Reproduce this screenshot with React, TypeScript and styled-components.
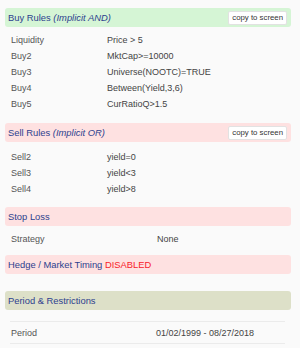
import styled, { createGlobalStyle } from "styled-components";

type Tone = "green" | "pink" | "olive";

const tones: Record<Tone, string> = {
  green: "#d5f5d5",
  pink: "#fee1e1",
  olive: "#dde0c8",
};

const buyRules = [
  ["Liquidity", "Price > 5"],
  ["Buy2", "MktCap>=10000"],
  ["Buy3", "Universe(NOOTC)=TRUE"],
  ["Buy4", "Between(Yield,3,6)"],
  ["Buy5", "CurRatioQ>1.5"],
];

const sellRules = [
  ["Sell2", "yield=0"],
  ["Sell3", "yield<3"],
  ["Sell4", "yield>8"],
];

export default function App() {
  return (
    <>
      <GlobalStyle />
      <Page>
        <Header $tone="green">
          <span>
            Buy Rules <Hint>(Implicit AND)</Hint>
          </span>
          <CopyButton>copy to screen</CopyButton>
        </Header>
        <RuleList $after={11}>
          {buyRules.map(([name, rule]) => (
            <RuleRow key={name}>
              <Label $width={96}>{name}</Label>
              <Value>{rule}</Value>
            </RuleRow>
          ))}
        </RuleList>

        <Header $tone="pink">
          <span>
            Sell Rules <Hint>(Implicit OR)</Hint>
          </span>
          <CopyButton>copy to screen</CopyButton>
        </Header>
        <RuleList $before={7} $after={10}>
          {sellRules.map(([name, rule]) => (
            <RuleRow key={name}>
              <Label $width={96}>{name}</Label>
              <Value>{rule}</Value>
            </RuleRow>
          ))}
        </RuleList>

        <Header $tone="pink">
          <span>Stop Loss</span>
        </Header>
        <RuleList $after={8}>
          <RuleRow>
            <Label $width={146}>Strategy</Label>
            <Value>None</Value>
          </RuleRow>
        </RuleList>

        <Header $tone="pink">
          <span>
            Hedge / Market Timing <Disabled>DISABLED</Disabled>
          </span>
        </Header>

        <Header $tone="olive" $gap={17}>
          <span>Period &amp; Restrictions</span>
        </Header>
        <PeriodTable>
          <Label $width={146} $inset={1}>Period</Label>
          <Value>01/02/1999 - 08/27/2018</Value>
        </PeriodTable>
      </Page>
    </>
  );
}

const GlobalStyle = createGlobalStyle`
  html, body {
    margin: 0;
    background: #fafafa;
  }
  body {
    font-family: "Liberation Sans", Arial, sans-serif;
    font-size: 9px;
    color: #444;
  }
`;

const Page = styled.div`
  padding: 8px 9px 0 5px;
`;

const Header = styled.div<{ $tone: Tone; $gap?: number }>`
  display: flex;
  align-items: center;
  justify-content: space-between;
  height: 19px;
  margin-top: ${({ $gap }) => $gap ?? 0}px;
  padding: 0 4px 0 3px;
  border-radius: 3px;
  background: ${({ $tone }) => tones[$tone]};
  color: #2d3f8e;
  font-size: 9.4px;
`;

const Hint = styled.i`
  font-style: italic;
`;

const Disabled = styled.span`
  color: #f8232b;
`;

const CopyButton = styled.button`
  height: 14px;
  padding: 0 3px;
  border: 1px solid #e2e2e2;
  border-radius: 2px;
  background: #fff;
  color: #333;
  font-family: "Liberation Sans", Arial, sans-serif;
  font-size: 7.8px;
  line-height: 12px;
`;

const RuleList = styled.div<{ $before?: number; $after?: number }>`
  display: flex;
  flex-direction: column;
  margin: ${({ $before }) => $before ?? 5}px 0 ${({ $after }) => $after ?? 0}px;
`;

const RuleRow = styled.div`
  display: flex;
  align-items: center;
  height: 16px;
  padding-left: 6px;
`;

const Label = styled.span<{ $width: number; $inset?: number }>`
  flex: 0 0 ${({ $width }) => $width}px;
  padding-left: ${({ $inset }) => $inset ?? 0}px;
  box-sizing: border-box;
  color: #555;
`;

const Value = styled.span`
  color: #444;
`;

const PeriodTable = styled.div`
  display: flex;
  align-items: center;
  height: 21px;
  margin: 11px 6px 0 5px;
  border-top: 1px solid #ebebeb;
  border-bottom: 1px solid #ebebeb;
`;
